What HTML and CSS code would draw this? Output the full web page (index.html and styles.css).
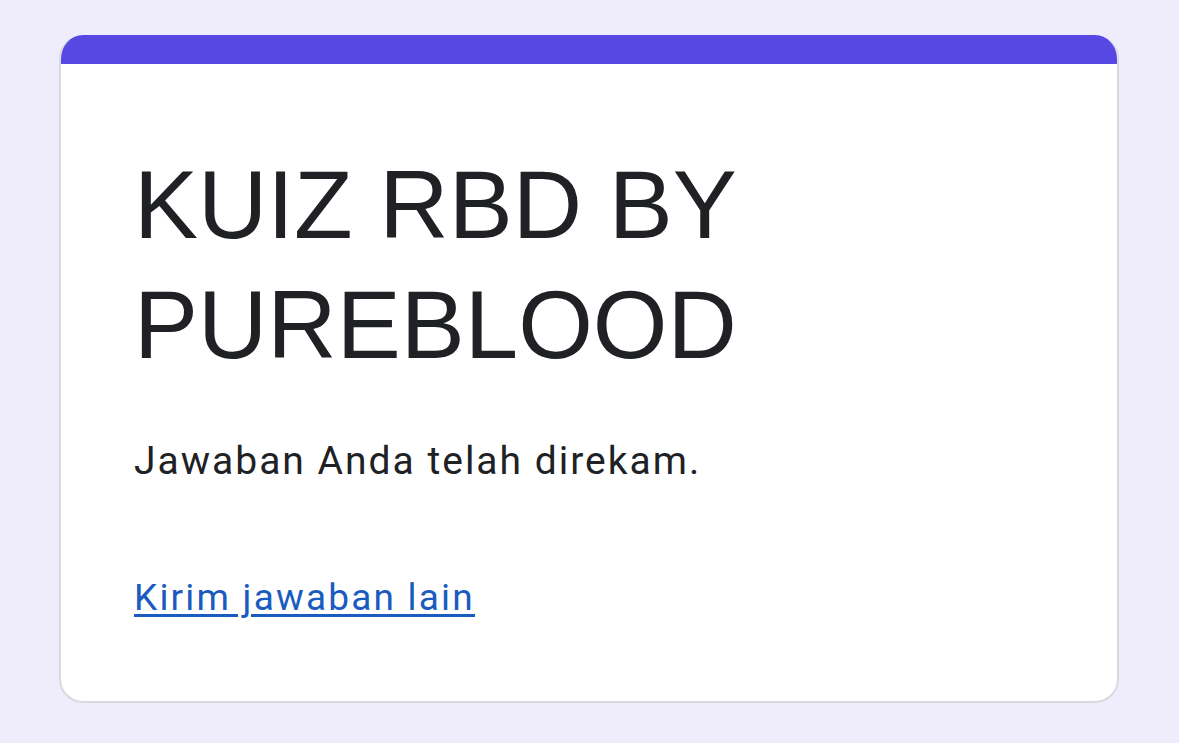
FILE: index.html
```html
<!DOCTYPE html>
<html lang="id">
<head>
<meta charset="utf-8">
<title>KUIZ RBD BY PUREBLOOD</title>
<link rel="stylesheet" href="styles.css">
</head>
<body>
<div class="page">
  <div class="card">
    <div class="card-top"></div>
    <div class="card-body">
      <h1 class="title">KUIZ RBD BY PUREBLOOD</h1>
      <p class="message">Jawaban Anda telah direkam.</p>
      <a class="link" href="#">Kirim jawaban lain</a>
    </div>
  </div>
</div>
</body>
</html>
```

FILE: styles.css
```css
html, body {
  margin: 0;
  padding: 0;
  background: #efedfc;
}
.page {
  padding: 35px 60px 0 59px;
}
.card {
  width: 1060px;
  background: #ffffff;
  border-radius: 24px;
  overflow: hidden;
  box-sizing: border-box;
  border: 2px solid #d9d9de;
  border-top: none;
}
.card-top {
  height: 29px;
  background: #5748e3;
  margin: 0 -2px;
}
.card-body {
  padding: 81px 72px 79px 73px;
}
.title {
  margin: 0;
  font-family: "Liberation Sans", Arial, sans-serif;
  font-weight: 400;
  font-size: 96px;
  line-height: 120px;
  color: #202124;
  width: 700px;
}
.message {
  margin: 52px 0 87px;
  font-family: Roboto, "Noto Sans", sans-serif;
  font-size: 39px;
  line-height: 49px;
  letter-spacing: 2px;
  color: #202124;
}
.link {
  display: block;
  width: max-content;
  font-family: Roboto, "Noto Sans", sans-serif;
  font-size: 37px;
  line-height: 49px;
  letter-spacing: 2.2px;
  color: #1a5bc0;
  text-decoration: underline;
  text-underline-offset: 4px;
  text-decoration-thickness: 2.5px;
}
```
